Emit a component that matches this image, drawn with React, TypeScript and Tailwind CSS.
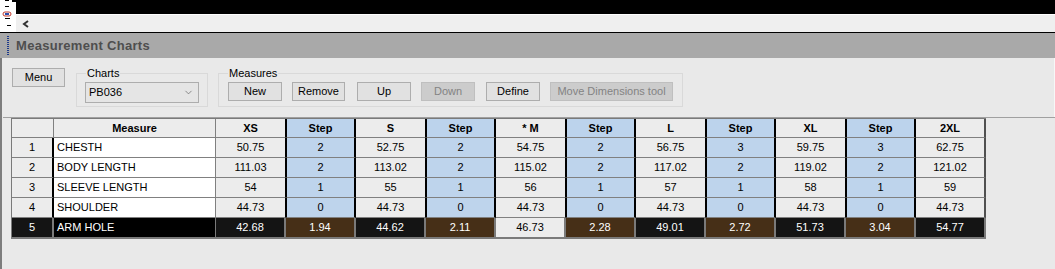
import { ChevronDown } from "lucide-react";

const COLS = ["XS", "Step", "S", "Step", "* M", "Step", "L", "Step", "XL", "Step", "2XL"];

const ROWS: { n: number; name: string; vals: string[] }[] = [
  { n: 1, name: "CHESTH", vals: ["50.75", "2", "52.75", "2", "54.75", "2", "56.75", "3", "59.75", "3", "62.75"] },
  { n: 2, name: "BODY LENGTH", vals: ["111.03", "2", "113.02", "2", "115.02", "2", "117.02", "2", "119.02", "2", "121.02"] },
  { n: 3, name: "SLEEVE LENGTH", vals: ["54", "1", "55", "1", "56", "1", "57", "1", "58", "1", "59"] },
  { n: 4, name: "SHOULDER", vals: ["44.73", "0", "44.73", "0", "44.73", "0", "44.73", "0", "44.73", "0", "44.73"] },
];

const ARM_HOLE = ["42.68", "1.94", "44.62", "2.11", "46.73", "2.28", "49.01", "2.72", "51.73", "3.04", "54.77"];

function Btn({ label, w, disabled }: { label: string; w: string; disabled?: boolean }) {
  return (
    <div
      className={`${w} h-[19px] flex items-center justify-center border text-[11px] ${
        disabled ? "bg-[#cccccc] border-[#bfbfbf] text-[#838383]" : "bg-[#e1e1e1] border-[#adadad] text-black"
      }`}
    >
      {label}
    </div>
  );
}

function Toolbar() {
  return (
    <div className="h-[59px] flex items-start border-r border-[#f7f7f7]">
      <div className="ml-[10px] mt-[10px]">
        <Btn label="Menu" w="w-[53px]" />
      </div>

      {/* Charts group */}
      <fieldset className="ml-[11px] mt-[9px] w-[131px] h-[40px] border border-[#d9d9d9] px-[8px]">
        <legend className="ml-[1px] px-[1px] text-[11px] leading-[13px]">Charts</legend>
        <div className="mt-[2px] w-[114px] h-[21px] bg-[#e5e5e5] border border-[#adadad] flex items-center justify-between pl-[3px] pr-[4px] text-[11px]">
          <span>PB036</span>
          <ChevronDown className="w-[11px] h-[11px] text-[#606060]" strokeWidth={1.5} />
        </div>
      </fieldset>

      {/* Measures group */}
      <fieldset className="ml-[10px] mt-[9px] w-[465px] h-[40px] border border-[#d9d9d9] px-[9px]">
        <legend className="ml-[0px] px-[1px] text-[11px] leading-[13px]">Measures</legend>
        <div className="mt-[2px] flex items-center">
          <Btn label="New" w="w-[54px]" />
          <div className="ml-[10px]"><Btn label="Remove" w="w-[53px]" /></div>
          <div className="ml-[12px]"><Btn label="Up" w="w-[54px]" /></div>
          <div className="ml-[10px]"><Btn label="Down" w="w-[54px]" disabled /></div>
          <div className="ml-[11px]"><Btn label="Define" w="w-[54px]" /></div>
          <div className="ml-[10px]"><Btn label="Move Dimensions tool" w="w-[123px]" disabled /></div>
        </div>
      </fieldset>
    </div>
  );
}

function Grid() {
  const isStep = (i: number) => i % 2 === 1;
  const beforeStep = (i: number) => i % 2 === 0 && i < 10;
  return (
    <div className="inline-grid grid-cols-[42px_162px_repeat(11,70px)] border-t border-l border-[#7a7a7a] text-[11px]">
      {/* header */}
      <div className="h-[19px] bg-[#ececec] border-r border-b border-[#808080]" />
      <div className="h-[19px] bg-[#ececec] border-r border-b border-[#808080] flex items-center justify-center font-bold">
        Measure
      </div>
      {COLS.map((c, i) => (
        <div
          key={i}
          className={`h-[19px] flex items-center justify-center font-bold border-b border-b-[#808080] ${
            isStep(i)
              ? "bg-[#bcd3ec] border-l border-l-black border-r-2 border-r-black"
              : beforeStep(i)
              ? "bg-[#ececec] border-r border-r-black"
              : "bg-[#ececec] border-r-2 border-r-[#505050]"
          }`}
        >
          {c}
        </div>
      ))}

      {/* body rows */}
      {ROWS.map((r) => (
        <div key={r.n} className="contents">
          <div className="h-[20px] bg-[#ececec] border-b border-b-[#808080] border-r-2 border-r-black flex items-center justify-center">
            {r.n}
          </div>
          <div className="h-[20px] bg-white border-b border-r border-[#808080] flex items-center pl-[3px]">
            {r.name}
          </div>
          {r.vals.map((v, i) => (
            <div
              key={i}
              className={`h-[20px] flex items-center justify-center border-b border-b-[#808080] ${
                isStep(i)
                  ? "bg-[#bed4ec] border-l border-l-black border-r-2 border-r-black"
                  : beforeStep(i)
                  ? "bg-[#ececec] border-r border-r-black"
                  : "bg-[#ececec] border-r-2 border-r-[#505050]"
              }`}
            >
              {v}
            </div>
          ))}
        </div>
      ))}

      {/* selected row */}
      <div className="h-[21px] bg-[#141414] text-white border-b-2 border-r-2 border-[#7a7a7a] flex items-center justify-center">
        5
      </div>
      <div className="h-[21px] bg-black text-white border-b-2 border-r border-[#7a7a7a] flex items-center pl-[3px]">
        ARM HOLE
      </div>
      {ARM_HOLE.map((v, i) => (
        <div
          key={i}
          className={`h-[21px] flex items-center justify-center border-b-2 border-r-2 border-[#7a7a7a] ${
            isStep(i) ? "bg-[#462f17] text-white" : i === 4 ? "bg-[#ececec] text-black" : "bg-[#141414] text-white"
          }`}
        >
          {v}
        </div>
      ))}
    </div>
  );
}

export default function App() {
  return (
    <div className="w-[1055px] h-[269px] overflow-hidden bg-[#e9e9e9] text-black font-['Liberation_Sans',Arial,sans-serif]">
      {/* window strip */}
      <div className="flex h-[32px]">
        <div className="w-[16px] h-[32px] bg-white">
          <svg width="16" height="32" viewBox="0 0 16 32">
            <rect x="5" y="0" width="4" height="1" fill="#000" />
            <rect x="12" y="0" width="4" height="2" fill="#000" />
            <rect x="5" y="6" width="4" height="1" fill="#000" />
            <rect x="3" y="12" width="8" height="4" rx="2" fill="none" stroke="#c0392b" strokeWidth="1" />
            <rect x="5" y="13" width="4" height="2" fill="#2d4fb0" />
            <rect x="5" y="18" width="5" height="1" fill="#000" />
            <rect x="7" y="25" width="4" height="1" fill="#000" />
          </svg>
        </div>
        <div className="flex-1 flex flex-col">
          <div className="h-[14px] bg-black" />
          <div className="h-px bg-white" />
          <div className="h-[17px] bg-[#efefef] flex items-center pl-[6px]">
            <svg width="8" height="8" viewBox="0 0 8 8">
              <polyline points="6,1 2,4 6,7" fill="none" stroke="#303030" strokeWidth="2" />
            </svg>
          </div>
        </div>
      </div>
      <div className="h-px bg-black" />

      {/* title bar */}
      <div className="h-[25px] bg-[#a9a9a9] flex items-center">
        <svg width="4" height="20" viewBox="0 0 4 20" className="ml-[6px]">
          {[0, 1, 2, 3, 4, 5, 6, 7, 8, 9].map((i) => (
            <rect key={i} x="1" y={i * 2} width="2" height="1" fill="#1e3a8a" />
          ))}
        </svg>
        <span className="ml-[6px] text-[13px] font-bold text-[#4e4e4e] tracking-[0.3px]">Measurement Charts</span>
      </div>

      {/* body */}
      <div className="h-[211px] border-l-2 border-[#7d7d7d] flex flex-col">
        <Toolbar />
        <div className="flex-1 ml-px border-t border-[#a0a0a0] pl-[8px]">
          <Grid />
        </div>
      </div>
    </div>
  );
}
